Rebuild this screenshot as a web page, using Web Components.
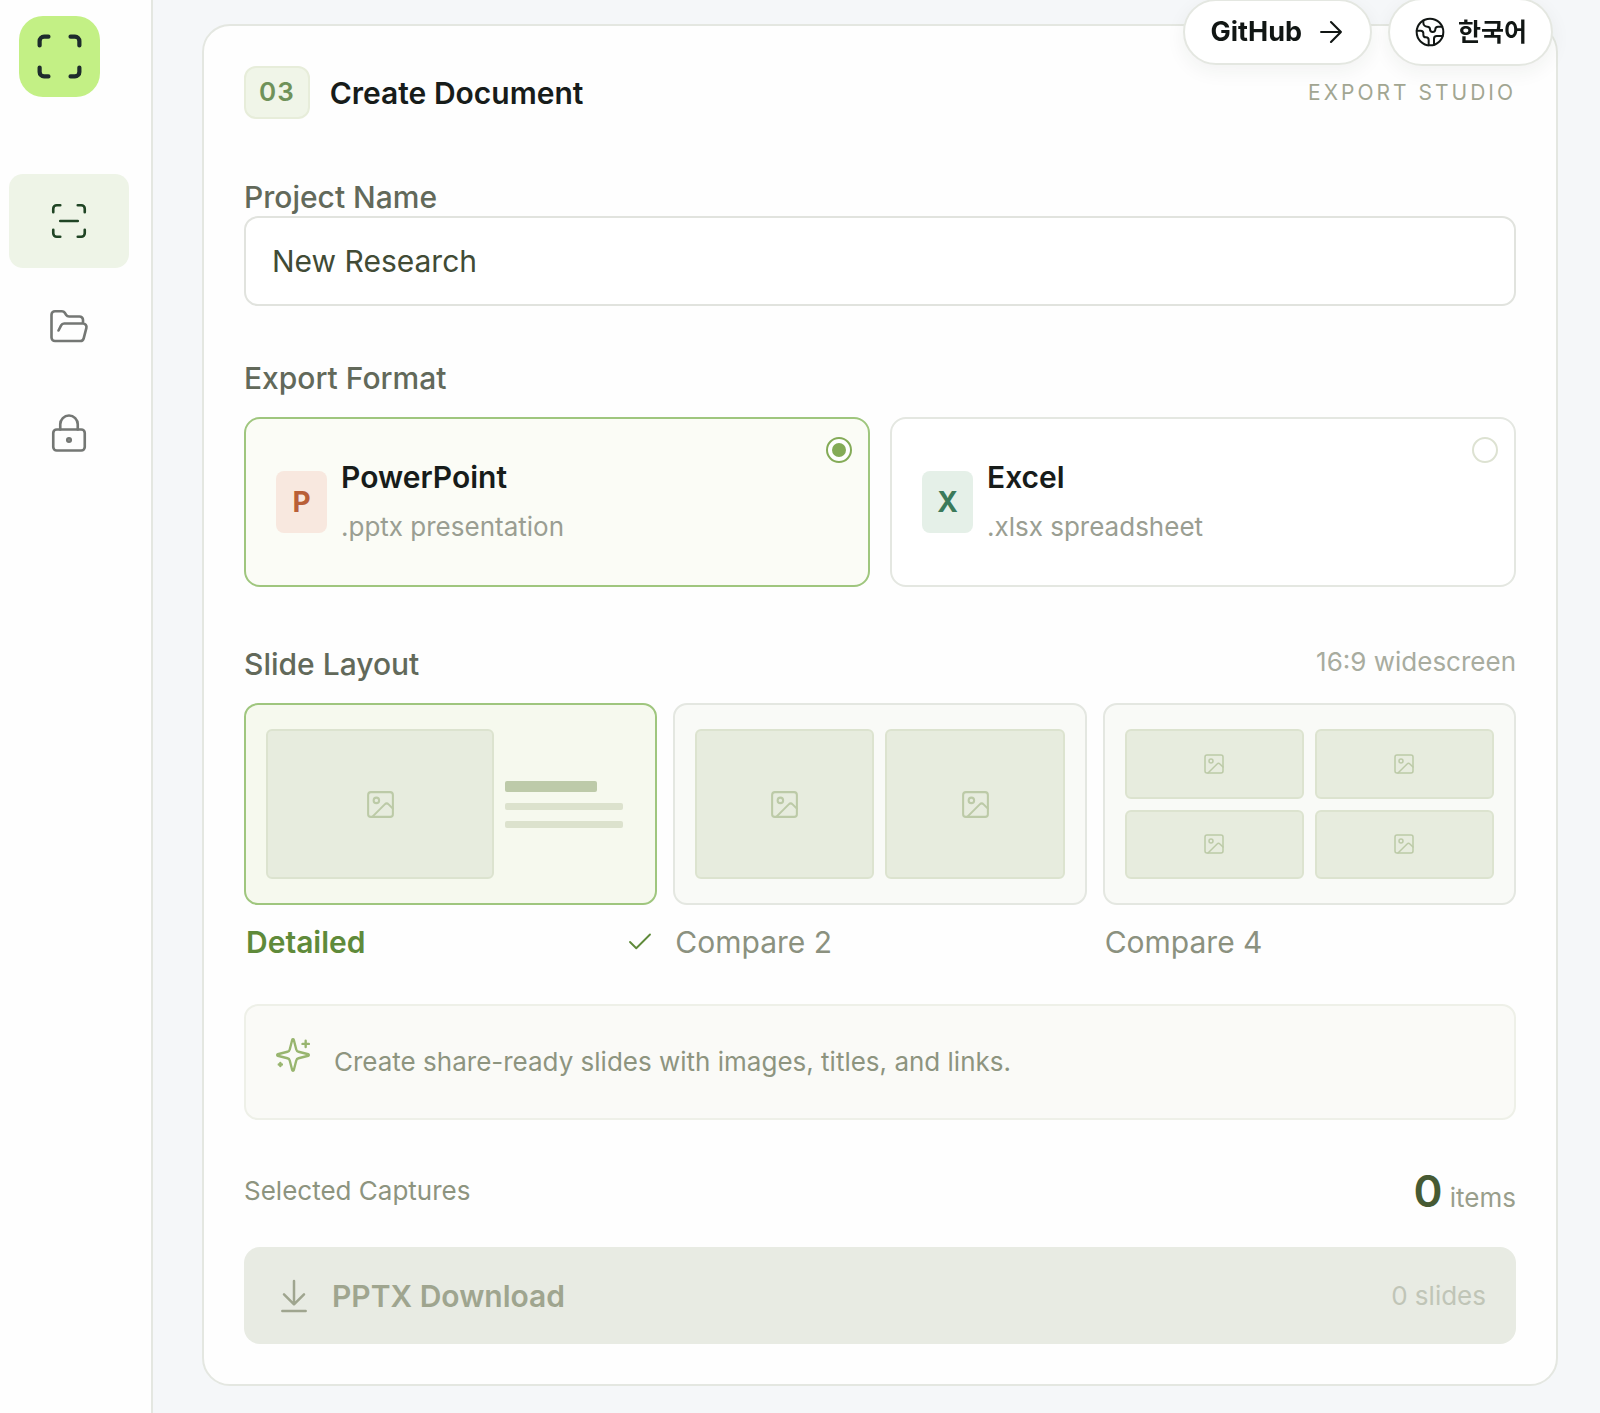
<!DOCTYPE html>
<html lang="en">
<head>
<meta charset="utf-8">
<meta name="viewport" content="width=device-width, initial-scale=1">
<title>Create Document</title>
<style>
  body {
    margin: 0;
    min-height: 100vh;
    display: flex;
    background: #f5f7f9;
    color: #171c1a;
    font-family: Inter, "Noto Sans CJK KR", sans-serif;
    font-size: 28px;
    line-height: 38px;

    --line: #e4e7e1;
    --green: #84ab57;
    --green-line: #9fc67e;
    --label: #62695a;
    --muted: #999e8c;
  }

  main {
    flex: 1;
    min-width: 0;
    padding: 24px 42px 28px 49px;
  }
</style>
</head>
<body>
  <side-nav></side-nav>
  <main>
    <studio-panel step="03" heading="Create Document" note="Export Studio">
      <text-field label="Project Name" value="New Research"></text-field>

      <option-group label="Export Format" columns="2">
        <format-option kind="pptx" letter="P" name="PowerPoint" detail=".pptx presentation" selected></format-option>
        <format-option kind="xlsx" letter="X" name="Excel" detail=".xlsx spreadsheet"></format-option>
      </option-group>

      <option-group label="Slide Layout" note="16:9 widescreen" columns="3">
        <layout-option kind="detailed" name="Detailed" selected></layout-option>
        <layout-option kind="two" name="Compare 2"></layout-option>
        <layout-option kind="four" name="Compare 4"></layout-option>
      </option-group>

      <hint-box>Create share-ready slides with images, titles, and links.</hint-box>
      <export-bar count="0"></export-bar>
    </studio-panel>
  </main>
  <quick-links></quick-links>

<script>
/**
 * Line icons, all on a 24 unit grid
 */

const ICONS = {
  corners: `<path d="M3 7V5a2 2 0 0 1 2-2h2M17 3h2a2 2 0 0 1 2 2v2M21 17v2a2 2 0 0 1-2 2h-2M7 21H5a2 2 0 0 1-2-2v-2"/>`,
  scan: `<path d="M3 7V5a2 2 0 0 1 2-2h2M17 3h2a2 2 0 0 1 2 2v2M21 17v2a2 2 0 0 1-2 2h-2M7 21H5a2 2 0 0 1-2-2v-2M7 12h10"/>`,
  folder: `<path d="m6 14 1.5-2.9A2 2 0 0 1 9.24 10H20a2 2 0 0 1 1.94 2.5l-1.54 6a2 2 0 0 1-1.95 1.5H4a2 2 0 0 1-2-2V5a2 2 0 0 1 2-2h3.9a2 2 0 0 1 1.69.9l.81 1.2a2 2 0 0 0 1.67.9H18a2 2 0 0 1 2 2v2"/>`,
  lock: `<circle cx="12" cy="16" r="1"/><rect x="3" y="10" width="18" height="12" rx="2"/><path d="M7 10V7a5 5 0 0 1 10 0v3"/>`,
  arrow: `<path d="M5 12h14M12 5l7 7-7 7"/>`,
  earth: `<path d="M21.54 15H17a2 2 0 0 0-2 2v4.54M7 3.34V5a3 3 0 0 0 3 3 2 2 0 0 1 2 2c0 1.1.9 2 2 2a2 2 0 0 0 2-2c0-1.1.9-2 2-2h3.17M11 21.95V18a2 2 0 0 0-2-2 2 2 0 0 1-2-2v-1a2 2 0 0 0-2-2H2.05"/><circle cx="12" cy="12" r="10"/>`,
  image: `<rect x="3" y="3" width="18" height="18" rx="2"/><circle cx="9" cy="9" r="2"/><path d="m21 15-3.09-3.09a2 2 0 0 0-2.82 0L6 21"/>`,
  check: `<path d="M20 6 9 17l-5-5"/>`,
  sparkles: `<path d="M9.94 15.5A2 2 0 0 0 8.5 14.06l-6.14-1.58a.5.5 0 0 1 0-.96L8.5 9.94A2 2 0 0 0 9.94 8.5l1.58-6.14a.5.5 0 0 1 .96 0L14.06 8.5A2 2 0 0 0 15.5 9.94l6.14 1.58a.5.5 0 0 1 0 .96L15.5 14.06a2 2 0 0 0-1.44 1.44l-1.58 6.14a.5.5 0 0 1-.96 0zM20 3v4M22 5h-4M4 17v2M5 18H3"/>`,
  download: `<path d="M12 17V3M6 11l6 6 6-6M19 21H5"/>`
};

const icon = (name, size, stroke = 1.5) =>
  `<svg width="${size}" height="${size}" viewBox="0 0 24 24" fill="none" stroke="currentColor" stroke-width="${stroke}" stroke-linecap="round" stroke-linejoin="round" aria-hidden="true">${ICONS[name]}</svg>`;

/**
 * Shared plumbing: each element only supplies its template
 */

class BaseElement extends HTMLElement {

  connectedCallback() {
    if(this.shadowRoot) return;
    this.attachShadow({ mode: "open" });
    let t = document.createElement("template");
    t.innerHTML = `
    <style>
      *, *::before { box-sizing: border-box; }
      :host { display: block; }
      svg { display: block; flex: none; }
      button, input { font: inherit; color: inherit; margin: 0; }
    </style>
    ${this.template}`;
    this.shadowRoot.appendChild(t.content.cloneNode(true));
    this.ready();
  }

  ready() {}

  attr(name) {
    return this.getAttribute(name) || "";
  }
}

class SideNav extends BaseElement {

  get template() {
    return `
    <style>
      :host {
        flex: none;
        padding: 16px 22px 0 9px;
        background: #fefefe;
        border-right: 2px solid var(--line);
      }

      .logo {
        display: flex;
        align-items: center;
        justify-content: center;
        width: 81px;
        height: 81px;
        margin: 0 0 77px 10px;
        border-radius: 24px;
        background: #c3f085;
        color: #1d2b2c;
      }

      nav {
        display: flex;
        flex-direction: column;
        gap: 12px;
      }

      nav a {
        display: flex;
        align-items: center;
        justify-content: center;
        width: 120px;
        height: 94px;
        border-radius: 14px;
        color: #747774;
      }

      nav a[aria-current] {
        background: #eef4e7;
        color: #1f4424;
      }
    </style>

    <a class="logo" href="#home" aria-label="Home">${icon("corners", 53, 1.9)}</a>
    <nav>
      <a href="#capture" aria-label="Capture" aria-current="page">${icon("scan", 42)}</a>
      <a href="#projects" aria-label="Projects">${icon("folder", 42)}</a>
      <a href="#privacy" aria-label="Privacy">${icon("lock", 42)}</a>
    </nav>
    `;
  }
}

/**
 * Pills floating over the top right corner
 */

class QuickLinks extends BaseElement {

  get template() {
    return `
    <style>
      :host {
        position: fixed;
        top: -2px;
        right: 47px;
        display: flex;
        align-items: center;
        gap: 16px;
        font-weight: 700;
        color: #111614;
      }

      a, button {
        display: flex;
        align-items: center;
        background: #fff;
        border: 2px solid var(--line);
        border-radius: 34px;
        box-shadow: 0 6px 20px rgba(30, 50, 30, .06);
        color: inherit;
        text-decoration: none;
        cursor: pointer;
      }

      a {
        height: 66px;
        gap: 12px;
        padding: 0 22px 0 25px;
        font-size: 27px;
      }

      button {
        height: 68px;
        gap: 12px;
        padding: 0 24px;
        font-size: 25px;
      }
    </style>

    <a href="#github">GitHub ${icon("arrow", 34)}</a>
    <button type="button" lang="ko">${icon("earth", 32)} 한국어</button>
    `;
  }
}

class StudioPanel extends BaseElement {

  get template() {
    return `
    <style>
      :host {
        padding: 40px;
        background: #fefefe;
        border: 2px solid var(--line);
        border-radius: 28px;
      }

      header {
        display: flex;
        align-items: center;
        gap: 20px;
        margin-bottom: 59px;
      }

      .step {
        padding: 5px 13px 6px;
        border: 2px solid #e7edda;
        border-radius: 12px;
        background: #f0f5e8;
        color: #6f925a;
        font-size: 26px;
        font-weight: 600;
        letter-spacing: 1px;
      }

      h2 {
        margin: 0;
        font-size: 30px;
        font-weight: 600;
      }

      .note {
        margin-left: auto;
        color: #a2a692;
        font-size: 21px;
        letter-spacing: 3px;
        text-transform: uppercase;
      }
    </style>

    <header>
      <span class="step">${this.attr("step")}</span>
      <h2>${this.attr("heading")}</h2>
      <span class="note">${this.attr("note")}</span>
    </header>
    <slot></slot>
    `;
  }
}

class TextField extends BaseElement {

  get template() {
    return `
    <style>
      :host {
        margin-bottom: 53px;
      }

      label {
        display: block;
        color: var(--label);
        font-size: 30px;
        font-weight: 500;
      }

      input {
        display: block;
        width: 100%;
        height: 90px;
        padding: 0 26px;
        border: 2px solid #e1e3de;
        border-radius: 14px;
        background: #fff;
        color: #414b35;
        font-size: 30px;
        outline: none;
      }

      input:focus {
        border-color: var(--green-line);
      }
    </style>

    <label for="field">${this.attr("label")}</label>
    <input id="field" type="text" value="${this.attr("value")}">
    `;
  }
}

/**
 * Titled row of options, keeps one of them selected
 */

class OptionGroup extends BaseElement {

  get template() {
    let three = this.attr("columns") == "3";
    return `
    <style>
      :host {
        margin-bottom: ${three ? 43 : 58}px;
      }

      .title {
        display: flex;
        justify-content: space-between;
        margin-bottom: 20px;
        color: var(--label);
        font-size: 30px;
        font-weight: 500;
      }

      .note {
        color: #a8ac9f;
        font-size: 26px;
        font-weight: 400;
        line-height: 34px;
      }

      .options {
        display: grid;
        grid-template-columns: repeat(${this.attr("columns")}, minmax(0, 1fr));
        gap: ${three ? 16 : 20}px;
      }
    </style>

    <div class="title">
      <span>${this.attr("label")}</span>
      ${this.attr("note") ? `<span class="note">${this.attr("note")}</span>` : ""}
    </div>
    <div class="options"><slot></slot></div>
    `;
  }

  ready() {
    this.addEventListener("pick", e => {
      [...this.children].forEach(el => el.toggleAttribute("selected", el == e.target));
    });
  }
}

class OptionElement extends BaseElement {

  static get observedAttributes() {
    return ["selected"];
  }

  attributeChangedCallback() {
    if(this.shadowRoot) this.sync();
  }

  ready() {
    this.control.addEventListener("click", () => {
      this.dispatchEvent(new CustomEvent("pick", { bubbles: true }));
    });
    this.sync();
  }

  get control() {
    return this.shadowRoot.querySelector("input, button");
  }
}

class FormatOption extends OptionElement {

  get template() {
    return `
    <style>
      label {
        display: flex;
        align-items: center;
        gap: 14px;
        height: 170px;
        padding: 18px 16px 18px 30px;
        border: 2px solid var(--line);
        border-radius: 16px;
        background: #fff;
        cursor: pointer;
      }

      :host([selected]) label {
        border-color: var(--green-line);
        background: #fbfcf6;
      }

      .tile {
        display: flex;
        align-items: center;
        justify-content: center;
        width: 51px;
        height: 62px;
        border-radius: 8px;
        background: #f8e8df;
        color: #b95f37;
        font-size: 28px;
        font-weight: 700;
      }

      .xlsx {
        background: #e5f0e8;
        color: #3b7a5a;
      }

      .text {
        display: flex;
        flex-direction: column;
        gap: 12px;
      }

      .name {
        font-size: 30px;
        font-weight: 600;
      }

      .detail {
        color: #9a9e92;
        font-size: 26px;
      }

      input {
        appearance: none;
        align-self: flex-start;
        display: grid;
        place-items: center;
        width: 26px;
        height: 26px;
        margin-left: auto;
        border: 2px solid #dde2d2;
        border-radius: 50%;
        background: #fff;
      }

      input:checked {
        border-color: var(--green);
      }

      input:checked::before {
        content: "";
        width: 14px;
        height: 14px;
        border-radius: 50%;
        background: var(--green);
      }
    </style>

    <label>
      <span class="tile ${this.attr("kind")}">${this.attr("letter")}</span>
      <span class="text">
        <span class="name">${this.attr("name")}</span>
        <span class="detail">${this.attr("detail")}</span>
      </span>
      <input type="radio" name="format">
    </label>
    `;
  }

  sync() {
    this.control.checked = this.hasAttribute("selected");
  }
}

class LayoutOption extends OptionElement {

  get preview() {
    let big = `<span class="cell">${icon("image", 33)}</span>`;
    let small = `<span class="cell">${icon("image", 24)}</span>`;
    return {
      detailed: `${big}<span class="lines"><i></i><i></i><i></i></span>`,
      two: big.repeat(2),
      four: small.repeat(4)
    }[this.attr("kind")];
  }

  get template() {
    return `
    <style>
      button {
        display: block;
        width: 100%;
        padding: 0;
        border: 0;
        background: none;
        color: #8b917f;
        font-size: 30px;
        text-align: left;
        cursor: pointer;
      }

      .preview {
        display: grid;
        grid-template-columns: 1fr 1fr;
        gap: 11px;
        height: 202px;
        padding: 24px 20px;
        border: 2px solid var(--line);
        border-radius: 14px;
        background: #f9faf7;
      }

      .detailed {
        grid-template-columns: 7fr 4fr;
      }

      .cell {
        display: flex;
        align-items: center;
        justify-content: center;
        border: 2px solid #dce3cf;
        border-radius: 6px;
        background: #e7ecde;
        color: #bccaa7;
      }

      .lines {
        display: flex;
        flex-direction: column;
        justify-content: center;
        gap: 11px;
        padding-right: 12px;
      }

      i {
        height: 7px;
        border-radius: 2px;
        background: #dce2cd;
      }

      i:first-child {
        width: 78%;
        height: 11px;
        background: #bdcaa9;
      }

      .caption {
        display: flex;
        align-items: center;
        justify-content: space-between;
        padding: 18px 2px 0;
      }

      .caption svg {
        display: none;
      }

      :host([selected]) button {
        color: #5f8a3a;
        font-weight: 600;
      }

      :host([selected]) .preview {
        border-color: var(--green-line);
        background: #f6f9ee;
      }

      :host([selected]) .caption svg {
        display: block;
      }
    </style>

    <button type="button">
      <span class="preview ${this.attr("kind")}">${this.preview}</span>
      <span class="caption">${this.attr("name")}${icon("check", 30)}</span>
    </button>
    `;
  }

  sync() {
    this.control.setAttribute("aria-pressed", this.hasAttribute("selected"));
  }
}

class HintBox extends BaseElement {

  get template() {
    return `
    <style>
      :host {
        display: flex;
        align-items: flex-start;
        gap: 22px;
        margin-bottom: 44px;
        padding: 30px 28px;
        border: 2px solid #eef0e8;
        border-radius: 14px;
        background: #fafaf7;
        color: #8d947f;
        font-size: 26px;
        line-height: 52px;
      }

      svg {
        color: #98b56f;
      }
    </style>

    ${icon("sparkles", 38)}
    <span><slot></slot></span>
    `;
  }
}

class ExportBar extends BaseElement {

  get template() {
    let count = this.attr("count");
    return `
    <style>
      .summary {
        display: flex;
        align-items: center;
        justify-content: space-between;
        margin-bottom: 29px;
        color: #8d947f;
        font-size: 26px;
      }

      .total {
        color: var(--muted);
      }

      strong {
        color: #465a33;
        font-size: 44px;
        font-weight: 600;
        line-height: 54px;
      }

      button {
        display: flex;
        align-items: center;
        gap: 18px;
        width: 100%;
        height: 97px;
        padding: 0 30px;
        border: 0;
        border-radius: 16px;
        background: #e8ebe3;
        color: #9fa58f;
        font-size: 30px;
        font-weight: 600;
      }

      .slides {
        margin-left: auto;
        color: #c0c5b7;
        font-size: 26px;
        font-weight: 400;
      }
    </style>

    <div class="summary">
      <span>Selected Captures</span>
      <span class="total"><strong>${count}</strong> items</span>
    </div>
    <button type="button" disabled>
      ${icon("download", 40)}
      PPTX Download
      <span class="slides">${count} slides</span>
    </button>
    `;
  }
}

customElements.define("side-nav", SideNav);
customElements.define("quick-links", QuickLinks);
customElements.define("studio-panel", StudioPanel);
customElements.define("text-field", TextField);
customElements.define("option-group", OptionGroup);
customElements.define("format-option", FormatOption);
customElements.define("layout-option", LayoutOption);
customElements.define("hint-box", HintBox);
customElements.define("export-bar", ExportBar);
</script>
</body>
</html>
